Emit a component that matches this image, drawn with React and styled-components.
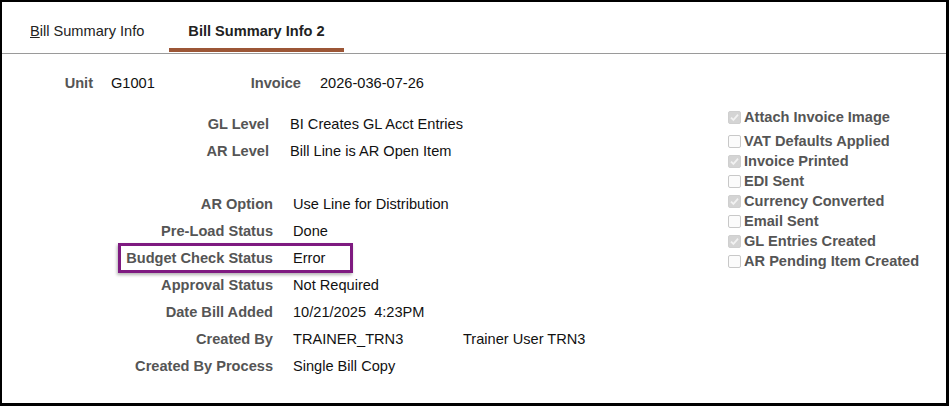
import React from 'react';
import styled, { createGlobalStyle } from 'styled-components';

const GlobalStyle = createGlobalStyle`
  html, body {
    margin: 0;
    padding: 0;
    background: #ffffff;
  }
  body {
    font-family: "Liberation Sans", Arial, sans-serif;
    font-size: 14.6px;
  }
`;

const Frame = styled.div`
  width: 949px;
  height: 406px;
  box-sizing: border-box;
  border-style: solid;
  border-color: #000;
  border-width: 2px 3px 3px 2px;
  background: #fff;
  display: flex;
  flex-direction: column;
`;

const TabBar = styled.div`
  display: flex;
  gap: 6px;
  height: 51px;
  padding-left: 9px;
  border-bottom: 1px solid #9a9a9a;
`;

const Tab = styled.div`
  display: flex;
  align-items: center;
  padding: 7px 19px 0;
  color: #222;
  font-weight: ${p => (p.$active ? 700 : 400)};
  box-shadow: ${p => (p.$active ? 'inset 0 -4px 0 #9c5636' : 'none')};
  cursor: pointer;
  margin-bottom: 1px;
`;

const Content = styled.div`
  display: flex;
  flex: 1;
`;

const LeftColumn = styled.div`
  width: 726px;
  padding-top: 16px;
`;

const TopRow = styled.div`
  display: grid;
  grid-template-columns: 91px 112px 60px 1fr;
  column-gap: 18px;
  line-height: 27px;
  margin-bottom: 14px;
`;

const Group = styled.div`
  margin-bottom: ${p => p.$gap ?? 0}px;
`;

const Field = styled.div`
  position: relative;
  display: flex;
  height: 27px;
  line-height: 27px;
`;

const Label = styled.div`
  width: ${p => p.$width ?? 271}px;
  text-align: right;
  font-weight: 700;
  color: #555555;
  white-space: nowrap;
`;

const Value = styled.div`
  margin-left: ${p => p.$offset ?? 20}px;
  width: ${p => (p.$width ? `${p.$width}px` : 'auto')};
  color: #111;
  white-space: pre;
`;

const Highlight = styled.span`
  position: absolute;
  left: 116px;
  top: -2px;
  width: 235px;
  height: 30px;
  box-sizing: border-box;
  border: 3px solid #7e1a80;
  box-shadow: -1px 2px 3px rgba(0, 0, 0, 0.3);
  pointer-events: none;
`;

const RightColumn = styled.div`
  padding-top: 53px;
  display: flex;
  flex-direction: column;
`;

const CheckRow = styled.label`
  display: flex;
  align-items: center;
  gap: 3px;
  height: 20px;
  margin-bottom: ${p => p.$gap ?? 0}px;
  font-weight: 700;
  color: #555555;
  white-space: nowrap;
`;

const Box = styled.span`
  width: 13px;
  height: 13px;
  box-sizing: border-box;
  border-radius: 2px;
  border: 1px solid ${p => (p.$checked ? '#cfcfcf' : '#c8c8c8')};
  background: ${p => (p.$checked ? '#d4d4d4' : '#fbfbfb')};
  display: flex;
  align-items: center;
  justify-content: center;
`;

const Check = ({ checked }) => (
  <Box $checked={checked}>
    {checked && (
      <svg width="11" height="11" viewBox="0 0 11 11">
        <path d="M2 5.6 L4.4 8 L9 2.6" fill="none" stroke="#f2f2f2" strokeWidth="1.8" />
      </svg>
    )}
  </Box>
);

const flags = [
  { label: 'Attach Invoice Image', checked: true, gap: 4 },
  { label: 'VAT Defaults Applied', checked: false },
  { label: 'Invoice Printed', checked: true },
  { label: 'EDI Sent', checked: false },
  { label: 'Currency Converted', checked: true },
  { label: 'Email Sent', checked: false },
  { label: 'GL Entries Created', checked: true },
  { label: 'AR Pending Item Created', checked: false },
];

const App = () => {
  return (
    <>
      <GlobalStyle />
      <Frame>
        <TabBar>
          <Tab>
            <span><u>B</u>ill Summary Info</span>
          </Tab>
          <Tab $active>Bill Summary Info 2</Tab>
        </TabBar>
        <Content>
          <LeftColumn>
            <TopRow>
              <Label $width={91}>Unit</Label>
              <Value $offset={0}>G1001</Value>
              <Label $width={60}>Invoice</Label>
              <Value $offset={1}>2026-036-07-26</Value>
            </TopRow>

            <Group $gap={26}>
              <Field>
                <Label $width={267}>GL Level</Label>
                <Value $offset={21}>BI Creates GL Acct Entries</Value>
              </Field>
              <Field>
                <Label $width={267}>AR Level</Label>
                <Value $offset={21}>Bill Line is AR Open Item</Value>
              </Field>
            </Group>

            <Group>
              <Field>
                <Label>AR Option</Label>
                <Value>Use Line for Distribution</Value>
              </Field>
              <Field>
                <Label>Pre-Load Status</Label>
                <Value>Done</Value>
              </Field>
              <Field>
                <Highlight />
                <Label>Budget Check Status</Label>
                <Value>Error</Value>
              </Field>
              <Field>
                <Label>Approval Status</Label>
                <Value>Not Required</Value>
              </Field>
              <Field>
                <Label>Date Bill Added</Label>
                <Value>10/21/2025  4:23PM</Value>
              </Field>
              <Field>
                <Label>Created By</Label>
                <Value $width={170}>TRAINER_TRN3</Value>
                <Value $offset={0}>Trainer User TRN3</Value>
              </Field>
              <Field>
                <Label>Created By Process</Label>
                <Value>Single Bill Copy</Value>
              </Field>
            </Group>
          </LeftColumn>

          <RightColumn>
            {flags.map(f => (
              <CheckRow key={f.label} $gap={f.gap}>
                <Check checked={f.checked} />
                {f.label}
              </CheckRow>
            ))}
          </RightColumn>
        </Content>
      </Frame>
    </>
  );
};

export default App;
